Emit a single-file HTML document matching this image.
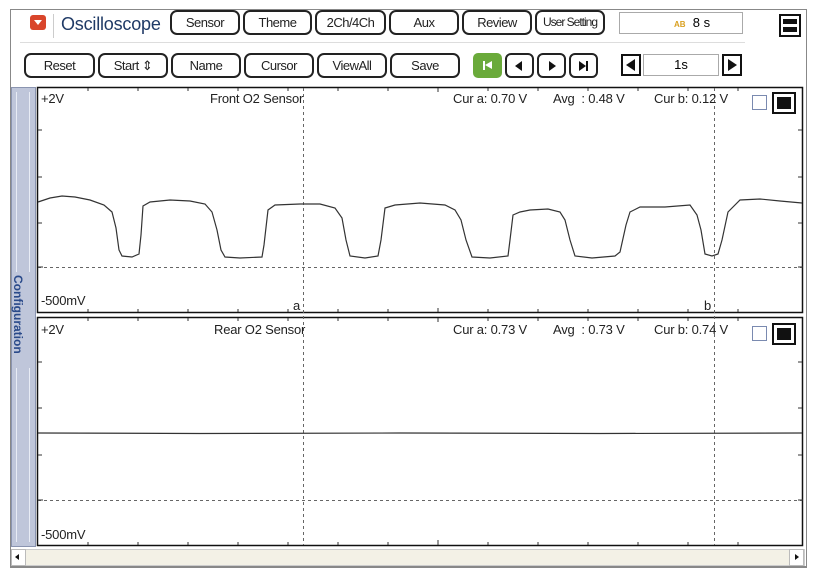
<!DOCTYPE html>
<html><head><meta charset="utf-8"><style>
*{box-sizing:border-box;margin:0;padding:0}
body{width:814px;height:579px;background:#fff;position:relative;overflow:hidden;font-family:"Liberation Sans",sans-serif;}
.a{position:absolute}
.btn{position:absolute;border:2px solid #222;border-radius:7px;background:#fff;font-size:13px;letter-spacing:-0.5px;color:#222;text-align:center;line-height:21px;height:25px}
.nb{position:absolute;border:2px solid #222;border-radius:6px;background:#fff;height:25px;width:29px}
.t{position:absolute;font-size:13px;color:#222;letter-spacing:-0.2px;white-space:nowrap}
</style></head><body>
<div class="a" style="left:10px;top:9px;width:797px;height:559px;border:1px solid #888;border-bottom:2px solid #888"></div>
<div class="a" style="left:30px;top:15px;width:16px;height:15px;background:#d9452b;border-radius:3px"></div>
<div class="a" style="left:34px;top:20px;width:0;height:0;border-left:4px solid transparent;border-right:4px solid transparent;border-top:5px solid #fff"></div>
<div class="a" style="left:53px;top:14px;width:1px;height:24px;background:#ccc"></div>
<div class="a" style="left:61px;top:14px;font-size:18px;color:#1f3a66;letter-spacing:-0.2px">Oscilloscope</div>
<div class="btn" style="left:170px;top:10px;width:70px">Sensor</div>
<div class="btn" style="left:243px;top:10px;width:69px">Theme</div>
<div class="btn" style="left:315px;top:10px;width:71px">2Ch/4Ch</div>
<div class="btn" style="left:389px;top:10px;width:70px">Aux</div>
<div class="btn" style="left:462px;top:10px;width:70px">Review</div>
<div class="btn" style="left:535px;top:10px;width:70px;letter-spacing:-1px;font-size:12px">User Setting</div>
<div class="a" style="left:619px;top:12px;width:124px;height:22px;border:1px solid #aaa;font-size:13px;line-height:20px;padding-left:54px"><span style="color:#d9a020;font-size:8px;font-weight:bold">AB</span>&nbsp; 8 s</div>
<div class="a" style="left:779px;top:14px;width:22px;height:23px;border:2px solid #111;background:#fff"><div class="a" style="left:2px;top:3px;width:14px;height:5px;background:#111"></div><div class="a" style="left:2px;top:11px;width:14px;height:5px;background:#111"></div></div>
<div class="a" style="left:20px;top:42px;width:725px;height:1px;background:#ddd"></div>
<div class="btn" style="left:24px;top:53px;width:71px">Reset</div>
<div class="btn" style="left:98px;top:53px;width:70px">Start ⇕</div>
<div class="btn" style="left:171px;top:53px;width:70px">Name</div>
<div class="btn" style="left:244px;top:53px;width:70px">Cursor</div>
<div class="btn" style="left:317px;top:53px;width:70px">ViewAll</div>
<div class="btn" style="left:390px;top:53px;width:70px">Save</div>
<div class="a" style="left:473px;top:53px;width:29px;height:25px;background:#6aaa3a;border-radius:5px"><div class="a" style="left:10px;top:8px;width:2px;height:9px;background:#fff"></div><div class="a" style="left:12px;top:8px;border-top:4.5px solid transparent;border-bottom:4.5px solid transparent;border-right:7px solid #fff"></div></div>
<div class="nb" style="left:505px;top:53px"><div class="a" style="left:8px;top:6px;border-top:5px solid transparent;border-bottom:5px solid transparent;border-right:7px solid #111"></div></div>
<div class="nb" style="left:537px;top:53px"><div class="a" style="left:10px;top:6px;border-top:5px solid transparent;border-bottom:5px solid transparent;border-left:7px solid #111"></div></div>
<div class="nb" style="left:569px;top:53px"><div class="a" style="left:8px;top:6px;border-top:5px solid transparent;border-bottom:5px solid transparent;border-left:7px solid #111"></div><div class="a" style="left:15px;top:6px;width:2px;height:10px;background:#111"></div></div>
<div class="a" style="left:621px;top:54px;width:20px;height:22px;border:2px solid #111"><div class="a" style="left:3px;top:3px;border-top:6px solid transparent;border-bottom:6px solid transparent;border-right:9px solid #111"></div></div>
<div class="a" style="left:643px;top:54px;width:76px;height:22px;border:1px solid #aaa;font-size:13px;text-align:center;line-height:20px">1s</div>
<div class="a" style="left:722px;top:54px;width:20px;height:22px;border:2px solid #111"><div class="a" style="left:4px;top:3px;border-top:6px solid transparent;border-bottom:6px solid transparent;border-left:9px solid #111"></div></div>
<div class="a" style="left:11px;top:87px;width:25px;height:460px;background:#bfc6da;border:1px solid #8a94b0"></div>
<div class="a" style="left:16px;top:92px;width:14px;height:450px;border-left:1px solid #e8ecf5;border-right:1px solid #e8ecf5"></div>
<div class="a" style="left:12px;top:272px;width:23px;height:96px;background:#bfc6da"></div>
<div class="a" style="left:25px;top:275px;transform:rotate(90deg);transform-origin:0 0;font-size:12px;font-weight:bold;color:#2a4a8a;white-space:nowrap">Configuration</div>
<svg class="a" style="left:0;top:0" width="814" height="579">
<g fill="none" stroke="#111" stroke-width="1.5">
<rect x="37.5" y="87.5" width="765" height="225"/>
<rect x="37.5" y="317.5" width="765" height="228"/>
</g>
<g stroke="#666" stroke-width="1" stroke-dasharray="3,3">
<line x1="38" y1="267.5" x2="802" y2="267.5"/>
<line x1="38" y1="500.5" x2="802" y2="500.5"/>
<line x1="303.5" y1="88" x2="303.5" y2="545"/>
<line x1="714.5" y1="88" x2="714.5" y2="545"/>
</g>
<g stroke="#333" stroke-width="1">
<path d="M38 130h4M38 177h4M38 223h4M38 267h5M38 362h4M38 408h4M38 455h4M38 500h5M798 130h4M798 177h4M798 223h4M798 267h5M798 362h4M798 408h4M798 455h4M798 500h5"/>
<path d="M88 88v3M138 88v3M188 88v3M238 88v3M288 88v3M338 88v3M388 88v3M438 88v4M488 88v3M538 88v3M588 88v3M638 88v3M688 88v3M738 88v3
M88 312v-3M138 312v-3M188 312v-3M238 312v-3M288 312v-3M338 312v-3M388 312v-3M438 312v-4M488 312v-3M538 312v-3M588 312v-3M638 312v-3M688 312v-3M738 312v-3
M88 318v3M138 318v3M188 318v3M238 318v3M288 318v3M338 318v3M388 318v3M438 318v4M488 318v3M538 318v3M588 318v3M638 318v3M688 318v3M738 318v3
M88 545v-3M138 545v-3M188 545v-3M238 545v-3M288 545v-3M338 545v-3M388 545v-3M438 545v-5M488 545v-3M538 545v-3M588 545v-3M638 545v-3M688 545v-3M738 545v-3"/>
</g>
<polyline fill="none" stroke="#333" stroke-width="1.2" points="38,202 50,198 62,196 75,197 90,200 104,205 112,212 116,228 119,250 122,256 132,257 139,254 141,235 143,206 150,202 170,200 190,201 205,204 212,212 217,230 221,250 225,257 240,258 262,257 264,245 268,210 275,205 300,204 320,204 335,208 342,218 346,240 350,256 365,258 378,256 381,240 385,208 395,205 420,203 445,205 455,210 461,220 466,240 472,257 490,258 508,256 510,240 513,215 520,212 530,210 548,209 560,212 565,220 570,240 575,256 592,258 615,256 620,252 626,225 630,212 640,207 665,207 690,205 697,215 701,230 705,254 712,256 718,254 722,240 728,212 740,200 760,199 780,201 802,203"/>
<polyline fill="none" stroke="#333" stroke-width="1.2" points="38,433 200,433.5 400,433 600,433.5 802,433"/>
<rect x="752.5" y="95.5" width="14" height="14" fill="#fff" stroke="#7a8ab0"/>
<rect x="773" y="93" width="22" height="20" fill="#fff" stroke="#111" stroke-width="2"/><rect x="777" y="97" width="14" height="12" fill="#111"/>
<rect x="752.5" y="326.5" width="14" height="14" fill="#fff" stroke="#7a8ab0"/>
<rect x="773" y="324" width="22" height="20" fill="#fff" stroke="#111" stroke-width="2"/><rect x="777" y="328" width="14" height="12" fill="#111"/>
</svg>
<div class="t" style="left:41px;top:91px">+2V</div>
<div class="t" style="left:210px;top:91px">Front O2 Sensor</div>
<div class="t" style="left:453px;top:91px">Cur a: 0.70 V</div>
<div class="t" style="left:553px;top:91px">Avg &nbsp;: 0.48 V</div>
<div class="t" style="left:654px;top:91px">Cur b: 0.12 V</div>
<div class="t" style="left:41px;top:293px">-500mV</div>
<div class="t" style="left:293px;top:298px">a</div>
<div class="t" style="left:704px;top:298px">b</div>
<div class="t" style="left:41px;top:322px">+2V</div>
<div class="t" style="left:214px;top:322px">Rear O2 Sensor</div>
<div class="t" style="left:453px;top:322px">Cur a: 0.73 V</div>
<div class="t" style="left:553px;top:322px">Avg &nbsp;: 0.73 V</div>
<div class="t" style="left:654px;top:322px">Cur b: 0.74 V</div>
<div class="t" style="left:41px;top:527px">-500mV</div>
<div class="a" style="left:11px;top:549px;width:794px;height:17px;background:#f3f1e6;border:1px solid #ccc"></div>
<div class="a" style="left:11px;top:549px;width:15px;height:17px;background:#fff;border:1px solid #bbb"></div>
<div class="a" style="left:15px;top:554px;border-top:3px solid transparent;border-bottom:3px solid transparent;border-right:4px solid #111"></div>
<div class="a" style="left:789px;top:549px;width:15px;height:17px;background:#fff;border:1px solid #bbb"></div>
<div class="a" style="left:795px;top:554px;border-top:3px solid transparent;border-bottom:3px solid transparent;border-left:4px solid #111"></div>
</body></html>
